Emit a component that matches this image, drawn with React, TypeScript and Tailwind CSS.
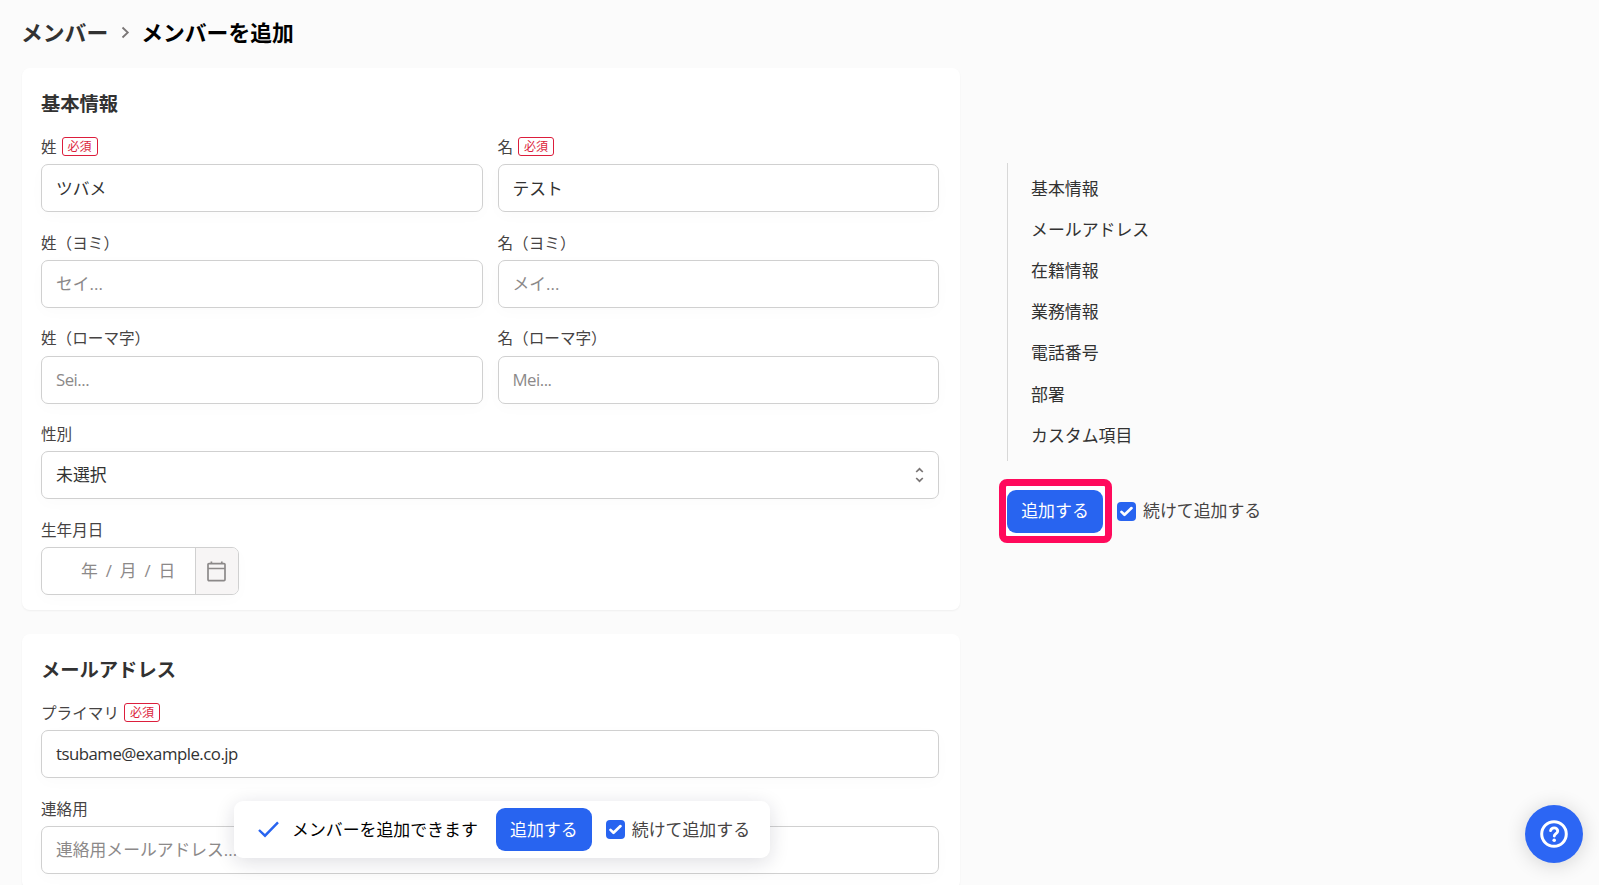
import React from 'react';

const navItems = ['基本情報', 'メールアドレス', '在籍情報', '業務情報', '電話番号', '部署', 'カスタム項目'];

const RequiredBadge = () => (
  <span className="-mt-[2px] ml-[5px] flex h-[19px] w-[36px] items-center justify-center rounded-[3px] border border-[#dc1e3c] pt-[1px] text-[12px] leading-none text-[#dc1e3c]">
    必須
  </span>
);

type FieldProps = {
  label: string;
  required?: boolean;
  children: React.ReactNode;
};

const Field = ({ label, required, children }: FieldProps) => (
  <div className="flex h-[80px] flex-col">
    <div className="flex h-[32px] items-center pb-[1px] text-[15.6px] leading-none text-[#464343]">
      {label}
      {required && <RequiredBadge />}
    </div>
    {children}
  </div>
);

type TextInputProps = {
  value?: string;
  placeholder?: string;
};

const TextInput = ({ value, placeholder }: TextInputProps) => {
  // Latin text is set a little tighter than kana and kanji
  const isLatin = /^[\x00-\x7f]+$/.test(value ?? placeholder ?? '');

  return (
    <input
      type="text"
      defaultValue={value}
      placeholder={placeholder}
      className={`h-[48px] w-full rounded-[7px] border border-[#d0d0d0] bg-white px-[14px] pb-[1px] text-[16.8px] text-[#323232] shadow-[0_4px_16px_rgba(0,0,0,0.02)] outline-none placeholder:text-[#8c8989] ${
        isLatin ? 'tracking-[-0.5px]' : 'tracking-normal'
      }`}
    />
  );
};

const Card = ({ title, children }: { title: string; children: React.ReactNode }) => (
  <section className="rounded-[8px] bg-white pb-[15px] pl-[19px] pr-[21px] shadow-[0_1px_2px_rgba(0,0,0,0.05)]">
    <h2 className="flex h-[64px] items-center pt-[7px] text-[19.3px] font-bold leading-none text-[#323232]">{title}</h2>
    <div className="flex flex-col gap-[15.8px]">{children}</div>
  </section>
);

const SubmitButton = () => (
  <button className="flex h-[43px] w-[96px] shrink-0 items-center justify-center rounded-[9px] bg-[#2864f0] pt-[1px] text-[16.9px] leading-none text-white">
    追加する
  </button>
);

const ContinueCheckbox = () => (
  <label className="flex items-center text-[16.9px] leading-none text-[#464343]">
    <span className="mr-[7px] flex h-[19px] w-[19px] items-center justify-center rounded-[4px] bg-[#2864f0]">
      <svg width="19" height="19" viewBox="0 0 19 19" fill="none" stroke="#fff" strokeWidth="2.7" strokeLinecap="round" strokeLinejoin="round">
        <path d="M4.5 9.9l3 2.9 7-6.7" />
      </svg>
    </span>
    <span className="pt-[1px]">続けて追加する</span>
  </label>
);

const App = () => {
  return (
    <div className="relative h-[885px] w-full overflow-hidden bg-[#fbfbfb] font-['Open_Sans','Noto_Sans_CJK_JP',sans-serif] font-normal">
      <header className="flex h-[68px] items-center pb-[3px] pl-[21px] text-[21.8px] font-bold leading-none">
        <span className="text-[#323232]">メンバー</span>
        <svg className="ml-[13px] mr-[11px]" width="9" height="13" viewBox="0 0 9 13" fill="none" stroke="#7a7676" strokeWidth="1.8">
          <path d="M1.5 1.5l5.3 5-5.3 5" />
        </svg>
        <h1 className="text-black">メンバーを追加</h1>
      </header>

      <div className="flex items-start pl-[22px]">
        <main className="flex w-[938px] shrink-0 flex-col gap-[24px]">
          <Card title="基本情報">
            <div className="grid grid-cols-2 gap-x-[15px] gap-y-[15.8px]">
              <Field label="姓" required>
                <TextInput value="ツバメ" />
              </Field>
              <Field label="名" required>
                <TextInput value="テスト" />
              </Field>
              <Field label="姓（ヨミ）">
                <TextInput placeholder="セイ..." />
              </Field>
              <Field label="名（ヨミ）">
                <TextInput placeholder="メイ..." />
              </Field>
              <Field label="姓（ローマ字）">
                <TextInput placeholder="Sei..." />
              </Field>
              <Field label="名（ローマ字）">
                <TextInput placeholder="Mei..." />
              </Field>
            </div>
            <Field label="性別">
              <div className="flex h-[48px] items-center justify-between rounded-[7px] border border-[#d0d0d0] bg-white pl-[14px] pr-[14px] text-[16.9px] leading-none text-[#323232] shadow-[0_4px_16px_rgba(0,0,0,0.02)]">
                <span>未選択</span>
                <svg width="9" height="16" viewBox="0 0 9 16" fill="none" stroke="#7a7676" strokeWidth="1.7">
                  <path d="M1.2 5l3.3-3.2L7.8 5M1.2 11l3.3 3.2L7.8 11" />
                </svg>
              </div>
            </Field>
            <Field label="生年月日">
              <div className="flex h-[48px] w-[198px] overflow-hidden rounded-[7px] border border-[#d0d0d0] bg-white text-[16.8px] leading-none text-[#8c8989] shadow-[0_4px_16px_rgba(0,0,0,0.02)]">
                <div className="flex w-[153px] items-center pl-[39px] pt-[1px]">
                  <span>年</span>
                  <span className="w-[22px] text-center">/</span>
                  <span>月</span>
                  <span className="w-[22px] text-center">/</span>
                  <span>日</span>
                </div>
                <div className="flex flex-1 items-center justify-center border-l border-[#d0d0d0] bg-[#f7f5f5] pr-[1px]">
                  <svg width="19" height="21" viewBox="0 0 19 21" fill="none" stroke="#8c8989" strokeWidth="1.7">
                    <rect x="1" y="2.6" width="17" height="17" rx="1" />
                    <path d="M1 7.5h17M4.4 0.4v2.4M14.8 0.4v2.4" />
                  </svg>
                </div>
              </div>
            </Field>
          </Card>

          <Card title="メールアドレス">
            <Field label="プライマリ" required>
              <TextInput value="tsubame@example.co.jp" />
            </Field>
            <Field label="連絡用">
              <TextInput placeholder="連絡用メールアドレス..." />
            </Field>
          </Card>
        </main>

        <aside className="ml-[47px] mt-[95px]">
          <nav className="flex h-[298px] flex-col border-l border-[#d8d8d8] pl-[23px] pt-[5.5px] text-[16.9px] leading-none text-[#323232]">
            {navItems.map((item) => (
              <a key={item} className="flex h-[41.2px] items-center">
                {item}
              </a>
            ))}
          </nav>
          <div className="-ml-[8px] mt-[18px] flex items-center">
            <div className="mr-[5px] flex h-[64px] w-[113px] items-center rounded-[8px] border-[7px] border-[#ff0a5c] bg-white pl-[1px]">
              <SubmitButton />
            </div>
            <ContinueCheckbox />
          </div>
        </aside>
      </div>

      {/* Floating submit bar */}
      <div className="absolute left-[234px] top-[801px] flex h-[57px] w-[536px] items-center rounded-[9px] bg-white pl-[24px] shadow-[0_4px_20px_rgba(20,20,50,0.14)]">
        <svg width="21" height="17" viewBox="0 0 21 17" fill="none" stroke="#2864f0" strokeWidth="2.4">
          <path d="M1 9l6 5.7L20 1.4" />
        </svg>
        <span className="ml-[13px] mr-[18px] whitespace-nowrap pt-[1px] text-[16.9px] leading-none text-black">メンバーを追加できます</span>
        <SubmitButton />
        <div className="ml-[14px] whitespace-nowrap">
          <ContinueCheckbox />
        </div>
      </div>

      {/* Help button */}
      <button className="absolute left-[1525px] top-[805px] flex h-[58px] w-[58px] items-center justify-center rounded-full bg-[#2c66f4] shadow-[0_2px_20px_rgba(0,0,0,0.16)]">
        <svg width="28" height="28" viewBox="0 0 28 28" fill="none" stroke="#fff" strokeLinecap="round" strokeLinejoin="round">
          <circle cx="14" cy="14" r="12.3" strokeWidth="3" />
          <path d="M10.6 10.6c.5-1.8 1.8-2.7 3.6-2.7 2 0 3.5 1.3 3.5 3.1 0 2.5-3.4 2.7-3.4 5" strokeWidth="2.9" />
          <circle cx="14.2" cy="20.2" r="1.8" fill="#fff" stroke="none" />
        </svg>
      </button>
    </div>
  );
};

export default App;
